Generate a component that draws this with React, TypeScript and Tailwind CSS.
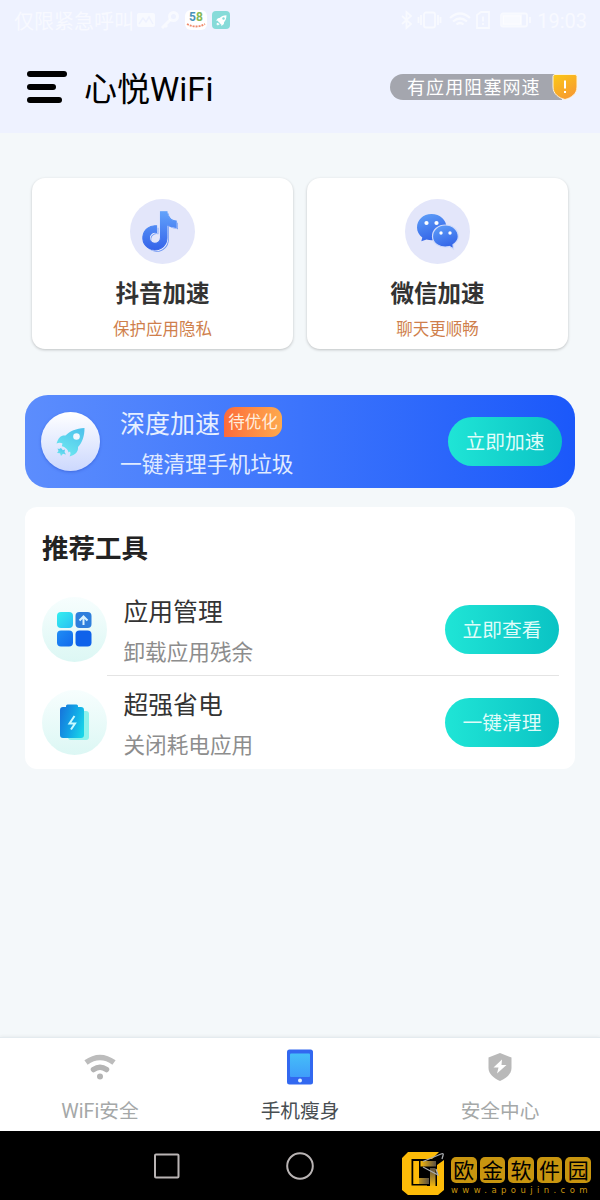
import type { ReactNode } from "react";

interface BoostCardProps {
  icon: ReactNode;
  title: string;
  note: string;
}

interface ToolRowProps {
  icon: ReactNode;
  title: string;
  note: string;
  action: string;
}

interface TabProps {
  icon: ReactNode;
  label: string;
  active?: boolean;
}

function StatusBar() {
  return (
    <div className="flex h-10 items-center justify-between pl-[14px] pr-[13px] text-white/60">
      <div className="flex items-center">
        <span className="w-[120px] whitespace-nowrap pt-[3px] text-[20px] leading-none">仅限紧急呼叫</span>
        <svg className="ml-[2px]" width="20" height="20" viewBox="0 0 20 20" fill="currentColor">
          <path d="M3 3h14a2 2 0 0 1 2 2v10a2 2 0 0 1-2 2H3a2 2 0 0 1-2-2V5a2 2 0 0 1 2-2z" />
          <path d="M3 14l4-6 3 4 3-5 4 7" fill="none" stroke="#eef2ff" strokeWidth="1.5" />
        </svg>
        <svg className="ml-[4px]" width="20" height="20" viewBox="0 0 20 20" fill="none" stroke="currentColor" strokeWidth="3">
          <circle cx="13.5" cy="6.5" r="4" />
          <path d="M10.5 9.5L2 18M5 15l2 2" />
        </svg>
        <div className="ml-[5px] flex h-5 w-[22px] flex-col items-center rounded-[6px] bg-white">
          <span className="mt-[2px] text-[12px] font-bold leading-[11px]">
            <span className="text-[#4b93b8]">5</span>
            <span className="text-[#84b955]">8</span>
          </span>
          <svg width="20" height="6" viewBox="0 0 20 6" fill="none" stroke="#ef8a6b">
            <path d="M1 1q9 5 18 0" strokeDasharray="2 1" strokeWidth="1.8" />
          </svg>
        </div>
        <div className="ml-[5px] flex h-[18px] w-[18px] items-center justify-center rounded-[4px] bg-[#86dbd9]">
          <Rocket size={11} fill="#ffffff" hole="#86dbd9" />
        </div>
      </div>
      <div className="flex items-center">
        <svg width="132" height="20" viewBox="0 0 132 20" fill="none" stroke="currentColor" strokeWidth="1.8">
          <path d="M2 6l9 8-4.500 4V2l4.500 4-9 8" />
          <rect x="24" y="2.500" width="11" height="15" rx="2" />
          <path d="M21 5v10M38 5v10M18.500 7v6M40.500 7v6" />
          <path d="M50 8q10-9 20 0M53 11.500q7-6 14 0M56.500 14.500q3.500-3 7 0" strokeWidth="2.200" />
          <path d="M77 5l4-3h8v16H77zM83 6.500v5M83 13v2" />
          <rect x="101" y="3.500" width="26" height="13" rx="2" />
          <path d="M103 5.500h18v9h-18z" fill="currentColor" />
          <path d="M130 7v6" />
        </svg>
        <span className="ml-[5px] pt-[1px] text-[20px] leading-none">19:03</span>
      </div>
    </div>
  );
}

function Rocket({ size, fill, hole }: { size: number; fill: string; hole: string }) {
  return (
    <svg width={size} height={size} viewBox="0 0 30 30">
      <defs>
        <linearGradient id="rocket" x1="0.8" y1="0" x2="0.2" y2="1">
          <stop offset="0" stopColor="#4fc3ec" />
          <stop offset="1" stopColor="#6feaf0" />
        </linearGradient>
      </defs>
      <path
        fill={fill}
        d="M28.500 1C20 1.500 14 4 9.500 8.500C5 8 2.500 10.500 .5 16.500C3 15.500 5 15.700 6.500 16.500L5.800 19.300C9 19.800 12 22.500 12.500 25.500L14 24.500C14.800 26 14.600 27.500 13.500 29.500C19.500 28 22.500 24.500 22 20C26.500 15.500 28.500 9 28.500 1z"
      />
      <path fill={fill} d="M5 21l-1.800 1L1.500 21.500l1 2.500L1 26l3 .3L5 29l2-2.200 3 .7-1.500-2.500.5-2.500-2.200.8z" />
      <circle cx="20.500" cy="9.500" r="3.300" fill={hole} />
    </svg>
  );
}

function Header() {
  return (
    <header className="h-[133px] bg-[#eef2ff]">
      <StatusBar />
      <div className="flex h-[94px] items-center justify-between pl-[27px] pr-[22px]">
        <div className="flex items-center">
          <div className="flex flex-col gap-[7px]">
            <span className="h-[6px] w-10 rounded-full bg-black" />
            <span className="h-[6px] w-[29px] rounded-full bg-black" />
            <span className="h-[6px] w-[35px] rounded-full bg-black" />
          </div>
          <h1 className="ml-[17px] pt-[4px] text-[33px] leading-none text-black">心悦WiFi</h1>
        </div>
        <div className="flex h-[26px] items-center rounded-l-full">
          <div className="flex h-[26px] w-[172px] items-center rounded-l-full bg-[#a4a6ae] pl-[17px] pt-[2px] text-[18px] leading-none tracking-[1.1px] whitespace-nowrap text-white">
            有应用阻塞网速
          </div>
          <svg className="-ml-[10px]" width="26" height="28" viewBox="0 0 26 28">
            <defs>
              <linearGradient id="alert" x1="0" y1="0" x2="0.6" y2="1">
                <stop offset="0" stopColor="#fbc916" />
                <stop offset="1" stopColor="#f79a31" />
              </linearGradient>
            </defs>
            <path
              d="M3 1.500H23a2 2 0 0 1 2 2V14C25 21 19 25 13 26.500C7 25 1 21 1 14V3.500a2 2 0 0 1 2-2z"
              fill="url(#alert)"
              stroke="#fff3dc"
            />
            <path d="M13 7.500v8M13 18v2" stroke="white" strokeWidth="2" />
          </svg>
        </div>
      </div>
    </header>
  );
}

function DouyinIcon() {
  const note =
    "M448 209.910a210.060 210.060 0 0 1-122.770-39.250V349.380A162.550 162.550 0 1 1 185 188.310V278.200a74.620 74.620 0 1 0 52.230 71.180V0h88a121.180 121.180 0 0 0 1.860 22.170A122.180 122.180 0 0 0 381 102.390a121.430 121.430 0 0 0 67 20.140z";
  return (
    <svg width="65" height="65" viewBox="0 0 65 65">
      <defs>
        <linearGradient id="note" x1="0.5" y1="0" x2="0.5" y2="1">
          <stop offset="0" stopColor="#62a2fb" />
          <stop offset="1" stopColor="#3563e9" />
        </linearGradient>
      </defs>
      <circle cx="32.500" cy="32.500" r="32.500" fill="#e3e6fa" />
      <path d={note} transform="translate(14.600 14.600) scale(.0745)" fill="#6f97f3" />
      <path d={note} transform="translate(13.900 13.900) scale(.0745)" fill="#e9eefd" />
      <path
        d={note}
        transform="translate(12.800 12.800) scale(.0745)"
        fill="url(#note)"
        stroke="url(#note)"
        strokeWidth="14"
      />
    </svg>
  );
}

function WechatIcon() {
  return (
    <svg width="65" height="65" viewBox="0 0 65 65">
      <defs>
        <linearGradient id="bubble" x1="0.3" y1="0" x2="0.7" y2="1">
          <stop offset="0" stopColor="#5c9bf7" />
          <stop offset="1" stopColor="#2f5fe6" />
        </linearGradient>
      </defs>
      <circle cx="32.500" cy="32.500" r="32.500" fill="#e3e6fa" />
      <path
        d="M26.500 15C18 15 12 21 12 28.500C12 32.500 14 36 17.300 38.500L16.300 42.300L21.500 40.500C32 43 41.500 38 41.500 28.500C41.500 21 35 15 26.500 15z"
        fill="url(#bubble)"
      />
      <circle cx="21.500" cy="24" r="2.100" fill="white" />
      <circle cx="31.500" cy="24" r="2.100" fill="white" />
      <path
        d="M40.500 26C33 26 27.500 31 27.500 37.500C27.500 45 35.500 49.500 44.500 47.500L48.500 50L48 45.700C51 43.700 53.300 40.700 53.300 37.500C53.300 31 47.500 26 40.500 26z"
        fill="url(#bubble)"
        stroke="#cfdafa"
        strokeWidth="1.200"
      />
      <circle cx="36" cy="34" r="1.700" fill="white" />
      <circle cx="45" cy="34" r="1.700" fill="white" />
    </svg>
  );
}

function BoostCard({ icon, title, note }: BoostCardProps) {
  return (
    <div className="flex h-[171px] flex-1 flex-col items-center rounded-[13px] bg-white pt-[21px] shadow-[0_1px_3px_rgba(0,0,0,0.22)]">
      {icon}
      <h2 className="mt-[17px] text-[23.5px] font-bold leading-[26px] text-[#333333]">{title}</h2>
      <p className="mt-[13px] text-[16.5px] leading-[20px] text-[#cf7f4c]">{note}</p>
    </div>
  );
}

function DeepBoost() {
  return (
    <section className="mx-[25px] mt-[46px] flex h-[93px] items-center rounded-[23px] bg-linear-to-r from-[#5c8dfd] via-[#3c74fc] to-[#1b58fa] pl-4 pr-[13px]">
      <div className="flex h-[59px] w-[59px] items-center justify-center rounded-full bg-linear-to-b from-white to-[#ccd8fd] shadow-[0_1px_3px_rgba(30,60,180,0.4)]">
        <Rocket size={30} fill="url(#rocket)" hole="#f3f8ff" />
      </div>
      <div className="ml-5 flex-1 pt-[2px]">
        <div className="flex h-[30px] items-center">
          <h2 className="pt-[5px] text-[25px] leading-[30px] text-[#e6efff]">深度加速</h2>
          <span className="ml-[4px] flex h-[30px] w-[58px] items-center justify-center rounded-t-[11px] rounded-br-[11px] bg-linear-to-r from-[#fc6a3a] to-[#fda94e] pt-[3px] text-[16.5px] leading-none text-[#ffeede]">
            待优化
          </span>
        </div>
        <p className="mt-[15px] text-[21.7px] leading-[26px] text-[#e0ebff]">一键清理手机垃圾</p>
      </div>
      <ActionButton label="立即加速" />
    </section>
  );
}

function ActionButton({ label }: { label: string }) {
  return (
    <button
      type="button"
      className="h-[49px] w-[114px] shrink-0 rounded-full bg-linear-to-r from-[#1fe5d6] to-[#09c3c4] pt-[3px] text-[19.8px] leading-none text-[#dffcf9]"
    >
      {label}
    </button>
  );
}

function AppsIcon() {
  return (
    <svg width="35" height="35" viewBox="0 0 35 35">
      <defs>
        <linearGradient id="tile" x1="0" y1="0" x2="1" y2="1">
          <stop offset="0" stopColor="#35eff0" />
          <stop offset="1" stopColor="#27bff2" />
        </linearGradient>
        <linearGradient id="tileBlue" x1="0" y1="0" x2="1" y2="1">
          <stop offset="0" stopColor="#1f8df5" />
          <stop offset="1" stopColor="#1269ec" />
        </linearGradient>
      </defs>
      <rect x="0" y="0" width="16" height="16" rx="4" fill="url(#tile)" />
      <rect x="18.500" y="0" width="16" height="16" rx="4" fill="#2e7fdc" />
      <rect x="0" y="18.500" width="16" height="16" rx="4" fill="url(#tileBlue)" />
      <rect x="18.500" y="18.500" width="16" height="16" rx="4" fill="#0f62ea" />
      <path d="M26.500 13V5M22.500 8.500l4-4 4 4" fill="none" stroke="#d9f3ff" strokeWidth="2" />
    </svg>
  );
}

function BatteryIcon() {
  return (
    <svg width="30" height="36" viewBox="0 0 30 36">
      <defs>
        <linearGradient id="cell" x1="0" y1="0.3" x2="1" y2="0.7">
          <stop offset="0" stopColor="#1679dc" />
          <stop offset="0.5" stopColor="#12a3e6" />
          <stop offset="1" stopColor="#18d3e8" />
        </linearGradient>
      </defs>
      <rect x="8" y="7" width="21" height="29" rx="3" fill="#8df3ec" />
      <path
        d="M6 3V2a1.500 1.500 0 0 1 1.500-1.500h9A1.500 1.500 0 0 1 18 2v1h3a3 3 0 0 1 3 3v25a3 3 0 0 1-3 3H3a3 3 0 0 1-3-3V6a3 3 0 0 1 3-3z"
        fill="url(#cell)"
      />
      <path d="M14.500 12l-5 7.500h5.500l-4 6" fill="none" stroke="#c8fbff" strokeWidth="2" />
    </svg>
  );
}

function ToolRow({ icon, title, note, action }: ToolRowProps) {
  return (
    <div className="flex h-[92px] items-center">
      <div className="flex h-[65px] w-[65px] items-center justify-center rounded-full bg-linear-to-b from-[#f7fefe] to-[#dcf7f4]">
        {icon}
      </div>
      <div className="ml-[16.5px] flex-1 pt-[5px]">
        <h3 className="text-[24.8px] leading-[30px] text-[#333333]">{title}</h3>
        <p className="mt-[12px] text-[21.6px] leading-[26px] text-[#8d8d8d]">{note}</p>
      </div>
      <ActionButton label={action} />
    </div>
  );
}

function Tab({ icon, label, active }: TabProps) {
  return (
    <div className="flex flex-1 flex-col items-center pt-[8px]">
      <div className="flex h-[42px] items-center">{icon}</div>
      <span
        className={`mt-[12px] text-[19.7px] leading-[24px] ${
          active ? "text-[#484e52]" : "text-[#a5a8a8]"
        }`}
      >
        {label}
      </span>
    </div>
  );
}

function TabBar() {
  return (
    <nav className="flex h-[94px] border-t border-[#e4ebef] bg-white shadow-[0_-1px_3px_rgba(0,0,0,0.05)]">
      <Tab
        label="WiFi安全"
        icon={
          <svg width="32" height="26" viewBox="0 0 32 26" fill="none" stroke="#bcbcbc">
            <path d="M2 8.500Q16-1.500 30 8.500" strokeWidth="5.500" />
            <path d="M9.500 15.500Q16 11 22.500 15.500" strokeWidth="5.500" stroke="#b4b4b4" strokeLinecap="round" />
            <circle cx="16" cy="22.500" r="3" fill="#b4b4b4" stroke="none" />
          </svg>
        }
      />
      <Tab
        active
        label="手机瘦身"
        icon={
          <svg width="28" height="36" viewBox="0 0 28 36">
            <defs>
              <linearGradient id="screen" x1="0.5" y1="0" x2="0.5" y2="1">
                <stop offset="0" stopColor="#45bff8" />
                <stop offset="1" stopColor="#3f9dfa" />
              </linearGradient>
            </defs>
            <rect x="1" y="0.500" width="26" height="35" rx="2.500" fill="#3268f0" />
            <rect x="4" y="4.500" width="20" height="23.500" rx="1" fill="url(#screen)" />
            <circle cx="14" cy="31.500" r="2" fill="#e0f0ff" />
          </svg>
        }
      />
      <Tab
        label="安全中心"
        icon={
          <svg width="24" height="28" viewBox="0 0 24 28">
            <path d="M12 0l11.500 4.500V15C23.500 21 18 25.500 12 28C6 25.500.5 21 .5 15V4.500z" fill="#b9b9b9" />
            <path d="M14 6.500L5.500 14.500h5L9 20.500l9.500-8.500h-5z" fill="white" />
          </svg>
        }
      />
    </nav>
  );
}

function SiteMark() {
  return (
    <div className="absolute top-[21px] left-[402px] flex items-start">
      <svg width="43" height="44" viewBox="0 0 43 44">
        <defs>
          <linearGradient id="goldFade" x1="0" y1="0" x2="1" y2="0">
            <stop offset="0" stopColor="#f7b90b" />
            <stop offset="1" stopColor="#5a5044" />
          </linearGradient>
          <linearGradient id="goldRise" x1="0" y1="0" x2="0" y2="1">
            <stop offset="0" stopColor="#5a5044" />
            <stop offset="1" stopColor="#f7b90b" />
          </linearGradient>
        </defs>
        {/* interlocked square frame */}
        <path d="M6 0H37L30 7H9.500V33.500H25V43H6L0 38V6z" fill="#fdbb08" />
        <path d="M11.500 9H17V26H27V32H11.500z" fill="url(#goldFade)" />
        <path d="M11.500 9H17V32H11.500z" fill="#fdbb08" />
        <path d="M18.500 9H34V14.500H18.500z" fill="url(#goldFade)" />
        <path d="M28 16H33.500V35H28z" fill="url(#goldRise)" />
        <path d="M35 13L42 8V38L36 43H25V34H35z" fill="#fdbb08" />
        <path d="M21 9.500L39 2q3-1 2 1.500l-1 3.500M21 15l15 8-2-6" fill="none" stroke="#a9acb0" strokeWidth="1.300" />
      </svg>
      <div className="ml-[6px] pt-[5px]">
        <div className="flex gap-[3px]">
          {["欧", "金", "软", "件", "园"].map((char) => (
            <span
              key={char}
              className="flex h-[26px] w-[25.6px] items-center justify-center rounded-[5px] bg-[#c8950f] pt-[2px] text-[21px] leading-none text-black"
            >
              {char}
            </span>
          ))}
        </div>
        <p className="mt-[2px] font-['DejaVu_Sans'] text-[8.5px] leading-[11px] tracking-[4.4px] whitespace-nowrap text-[#c8950f]">
          www.apoujin.com
        </p>
      </div>
    </div>
  );
}

function SystemNav() {
  return (
    <div className="relative flex h-[69px] items-center bg-black pl-[154px]">
      <svg width="26" height="26" viewBox="0 0 26 26" fill="none" stroke="#b9b4b4" strokeWidth="2">
        <rect x="1" y="1.500" width="23.500" height="23" rx="1" />
      </svg>
      <svg className="ml-[106px]" width="28" height="28" viewBox="0 0 28 28" fill="none" stroke="#b9b4b4" strokeWidth="2">
        <circle cx="14" cy="14" r="12.800" />
      </svg>
      <SiteMark />
    </div>
  );
}

export default function App() {
  return (
    <div className="flex h-[1200px] w-[600px] flex-col overflow-hidden bg-[#f4f8fa] font-[Roboto,'Noto_Sans_CJK_SC',sans-serif]">
      <Header />
      <main className="flex-1">
        <div className="mx-8 mt-[45px] flex gap-[14px]">
          <BoostCard icon={<DouyinIcon />} title="抖音加速" note="保护应用隐私" />
          <BoostCard icon={<WechatIcon />} title="微信加速" note="聊天更顺畅" />
        </div>
        <DeepBoost />
        <section className="mx-[25px] mt-[19px] h-[262px] rounded-[12px] bg-white pl-[17px] pr-4 pt-[26px]">
          <h2 className="text-[26.5px] font-bold leading-[32px] text-[#222222]">推荐工具</h2>
          <div className="mt-[18px]">
            <ToolRow icon={<AppsIcon />} title="应用管理" note="卸载应用残余" action="立即查看" />
            <div className="ml-[65px] h-px bg-[#e4e4e4]" />
            <ToolRow icon={<BatteryIcon />} title="超强省电" note="关闭耗电应用" action="一键清理" />
          </div>
        </section>
      </main>
      <TabBar />
      <SystemNav />
    </div>
  );
}
